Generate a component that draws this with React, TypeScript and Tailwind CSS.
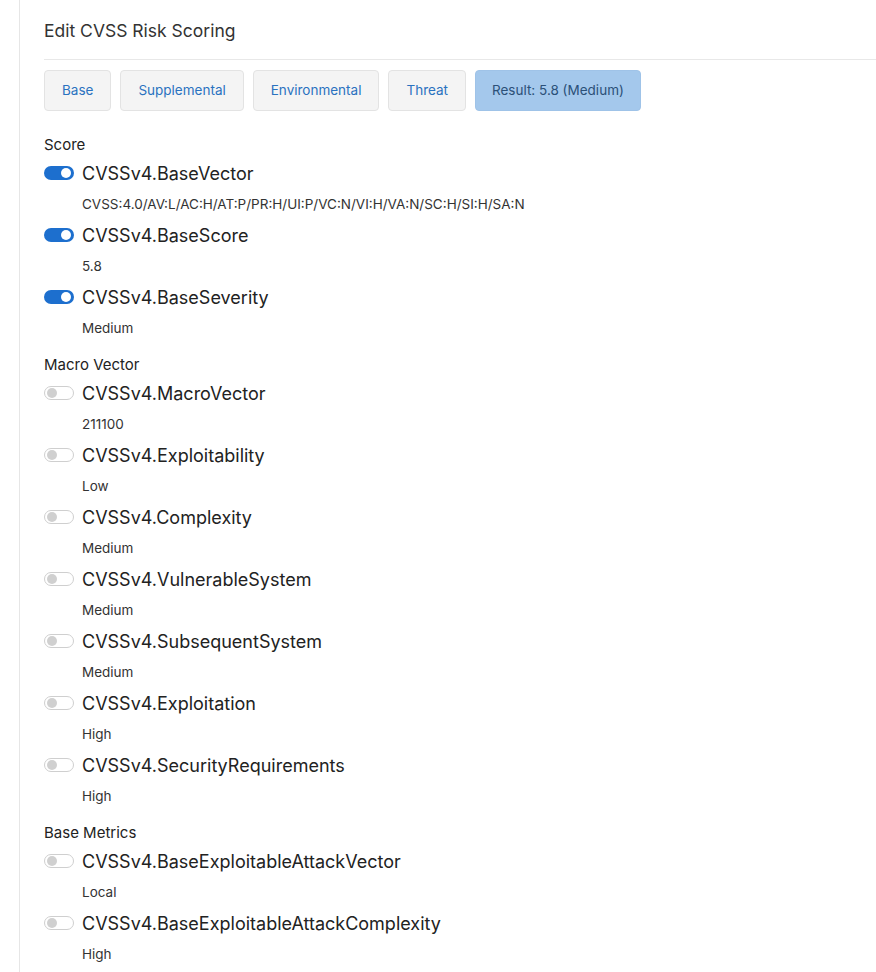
type Item = { label: string; value: string; on?: boolean };
type Section = { title: string; items: Item[] };

const TABS = ['Base', 'Supplemental', 'Environmental', 'Threat'];

const SECTIONS: Section[] = [
	{
		title: 'Score',
		items: [
			{
				label: 'CVSSv4.BaseVector',
				value: 'CVSS:4.0/AV:L/AC:H/AT:P/PR:H/UI:P/VC:N/VI:H/VA:N/SC:H/SI:H/SA:N',
				on: true,
			},
			{ label: 'CVSSv4.BaseScore', value: '5.8', on: true },
			{ label: 'CVSSv4.BaseSeverity', value: 'Medium', on: true },
		],
	},
	{
		title: 'Macro Vector',
		items: [
			{ label: 'CVSSv4.MacroVector', value: '211100' },
			{ label: 'CVSSv4.Exploitability', value: 'Low' },
			{ label: 'CVSSv4.Complexity', value: 'Medium' },
			{ label: 'CVSSv4.VulnerableSystem', value: 'Medium' },
			{ label: 'CVSSv4.SubsequentSystem', value: 'Medium' },
			{ label: 'CVSSv4.Exploitation', value: 'High' },
			{ label: 'CVSSv4.SecurityRequirements', value: 'High' },
		],
	},
	{
		title: 'Base Metrics',
		items: [
			{ label: 'CVSSv4.BaseExploitableAttackVector', value: 'Local' },
			{ label: 'CVSSv4.BaseExploitableAttackComplexity', value: 'High' },
		],
	},
];

function Toggle({ on }: { on?: boolean }) {
	return on ? (
		<span className="relative inline-block w-[30px] h-[14px] rounded-full bg-[#1d6fce] shrink-0">
			<span className="absolute right-[3px] top-[2px] w-[10px] h-[10px] rounded-full bg-white" />
		</span>
	) : (
		<span className="relative inline-block w-[30px] h-[14px] rounded-full bg-white border border-[#cfcfcf] shrink-0">
			<span className="absolute left-[2px] top-[1px] w-[10px] h-[10px] rounded-full bg-[#d0d0d0]" />
		</span>
	);
}

export default function App() {
	return (
		<div
			className="min-h-[972px] bg-white pl-[19px] text-[#333]"
			style={{ fontFamily: 'Inter, "Liberation Sans", sans-serif' }}
		>
			<div className="border-l border-[#e6e6e6] min-h-[972px] pl-[24px]">
				<h1 className="pt-[19px] pb-[16px] text-[17.5px] leading-[24px] text-[#333]">
					Edit CVSS Risk Scoring
				</h1>
				<div className="border-t border-[#e8e8e8]" />
				<div className="flex gap-[9px] pt-[10px]">
					{TABS.map((t) => (
						<button
							key={t}
							type="button"
							className="h-[41px] px-[17px] rounded-[4px] bg-[#f4f4f4] border border-[#e3e3e3] text-[13.5px] text-[#2a72c0]"
						>
							{t}
						</button>
					))}
					<button
						type="button"
						className="h-[41px] px-[16px] rounded-[4px] bg-[#a4c8ec] border border-[#9fc3e8] text-[13.5px] text-[#2b5078]"
					>
						Result: 5.8 (Medium)
					</button>
				</div>
				<div className="pt-[24px]">
					{SECTIONS.map((s) => (
						<div key={s.title} className="mb-[13px]">
							<div className="text-[15px] leading-[20px] text-[#222] mb-[1px]">{s.title}</div>
							{s.items.map((it) => (
								<div key={it.label} className="pt-[5px]">
									<div className="flex items-center gap-[8px] h-[24px]">
										<Toggle on={it.on} />
										<span className="text-[18px] text-[#222]">{it.label}</span>
									</div>
									<div className="pl-[38px] pt-[9px] pb-[4px] text-[13.5px] leading-[20px] text-[#333]">
										{it.value}
									</div>
								</div>
							))}
						</div>
					))}
				</div>
			</div>
		</div>
	);
}
